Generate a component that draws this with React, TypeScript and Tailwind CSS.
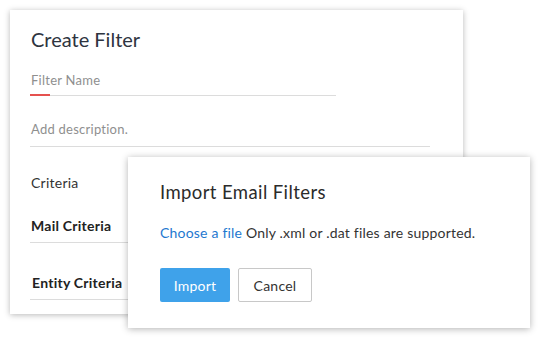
import React from "react";

const App = () => {
  return (
    <div
      className="relative w-[540px] h-[341px] bg-white overflow-hidden tracking-[0.25px]"
      style={{ fontFamily: "Lato, 'Open Sans', sans-serif" }}
    >
      {/* back panel */}
      <div className="ml-[10px] mt-[10px] w-[453px] h-[304px] bg-white shadow-[0_1px_6px_rgba(0,0,0,0.28)] pl-[20px] pt-[15px]">
        <h1 className="text-[20px] leading-[28px] tracking-normal text-[#2e3440] pl-[1px]">Create Filter</h1>
        <div className="mt-[18px] w-[306px]">
          <div className="text-[13px] leading-[18px] text-[#8f8f8f] pl-[1px]">Filter Name</div>
          <div className="mt-[6px] h-[1px] bg-[#dcdcdc] relative">
            <div className="absolute left-0 top-[-1px] w-[20px] h-[2px] bg-[#e5514f]" />
          </div>
        </div>
        <div className="mt-[24px] w-[400px]">
          <div className="text-[13px] leading-[18px] text-[#8f8f8f] pl-[1px]">Add description.</div>
          <div className="mt-[8px] h-[1px] bg-[#dcdcdc]" />
        </div>
        <div className="mt-[27px] text-[14px] leading-[18px] text-[#333] pl-[1px]">Criteria</div>
        <div className="mt-[25px] w-[400px]">
          <div className="text-[14px] leading-[18px] font-bold text-[#222] pl-[1px]">Mail Criteria</div>
          <div className="mt-[7px] h-[1px] bg-[#dcdcdc]" />
        </div>
        <div className="mt-[31px] w-[400px]">
          <div className="text-[14px] leading-[18px] font-bold text-[#222] pl-[2px]">Entity Criteria</div>
          <div className="mt-[7px] h-[1px] bg-[#dcdcdc]" />
        </div>
      </div>

      {/* front dialog */}
      <div className="absolute left-[128px] top-[157px] w-[402px] h-[171px] bg-white shadow-[0_1px_7px_rgba(0,0,0,0.3)] pl-[32px] pt-[23px]">
        <h2 className="text-[18.5px] leading-[24px] tracking-[0.4px] text-[#2b2b2b]">Import Email Filters</h2>
        <p className="mt-[20px] text-[14px] leading-[18px] tracking-[0.2px] text-[#333]">
          <span className="text-[#1e78cf]">Choose a file</span> Only .xml or .dat files are supported.
        </p>
        <div className="mt-[26px] flex gap-[8px]">
          <button className="w-[70px] h-[34px] rounded-[2px] bg-[#3fa2ea] text-white text-[14px]">Import</button>
          <button className="w-[74px] h-[34px] rounded-[2px] bg-white border border-[#c8c8c8] text-[#333] text-[14px]">Cancel</button>
        </div>
      </div>
    </div>
  );
};

export default App;
